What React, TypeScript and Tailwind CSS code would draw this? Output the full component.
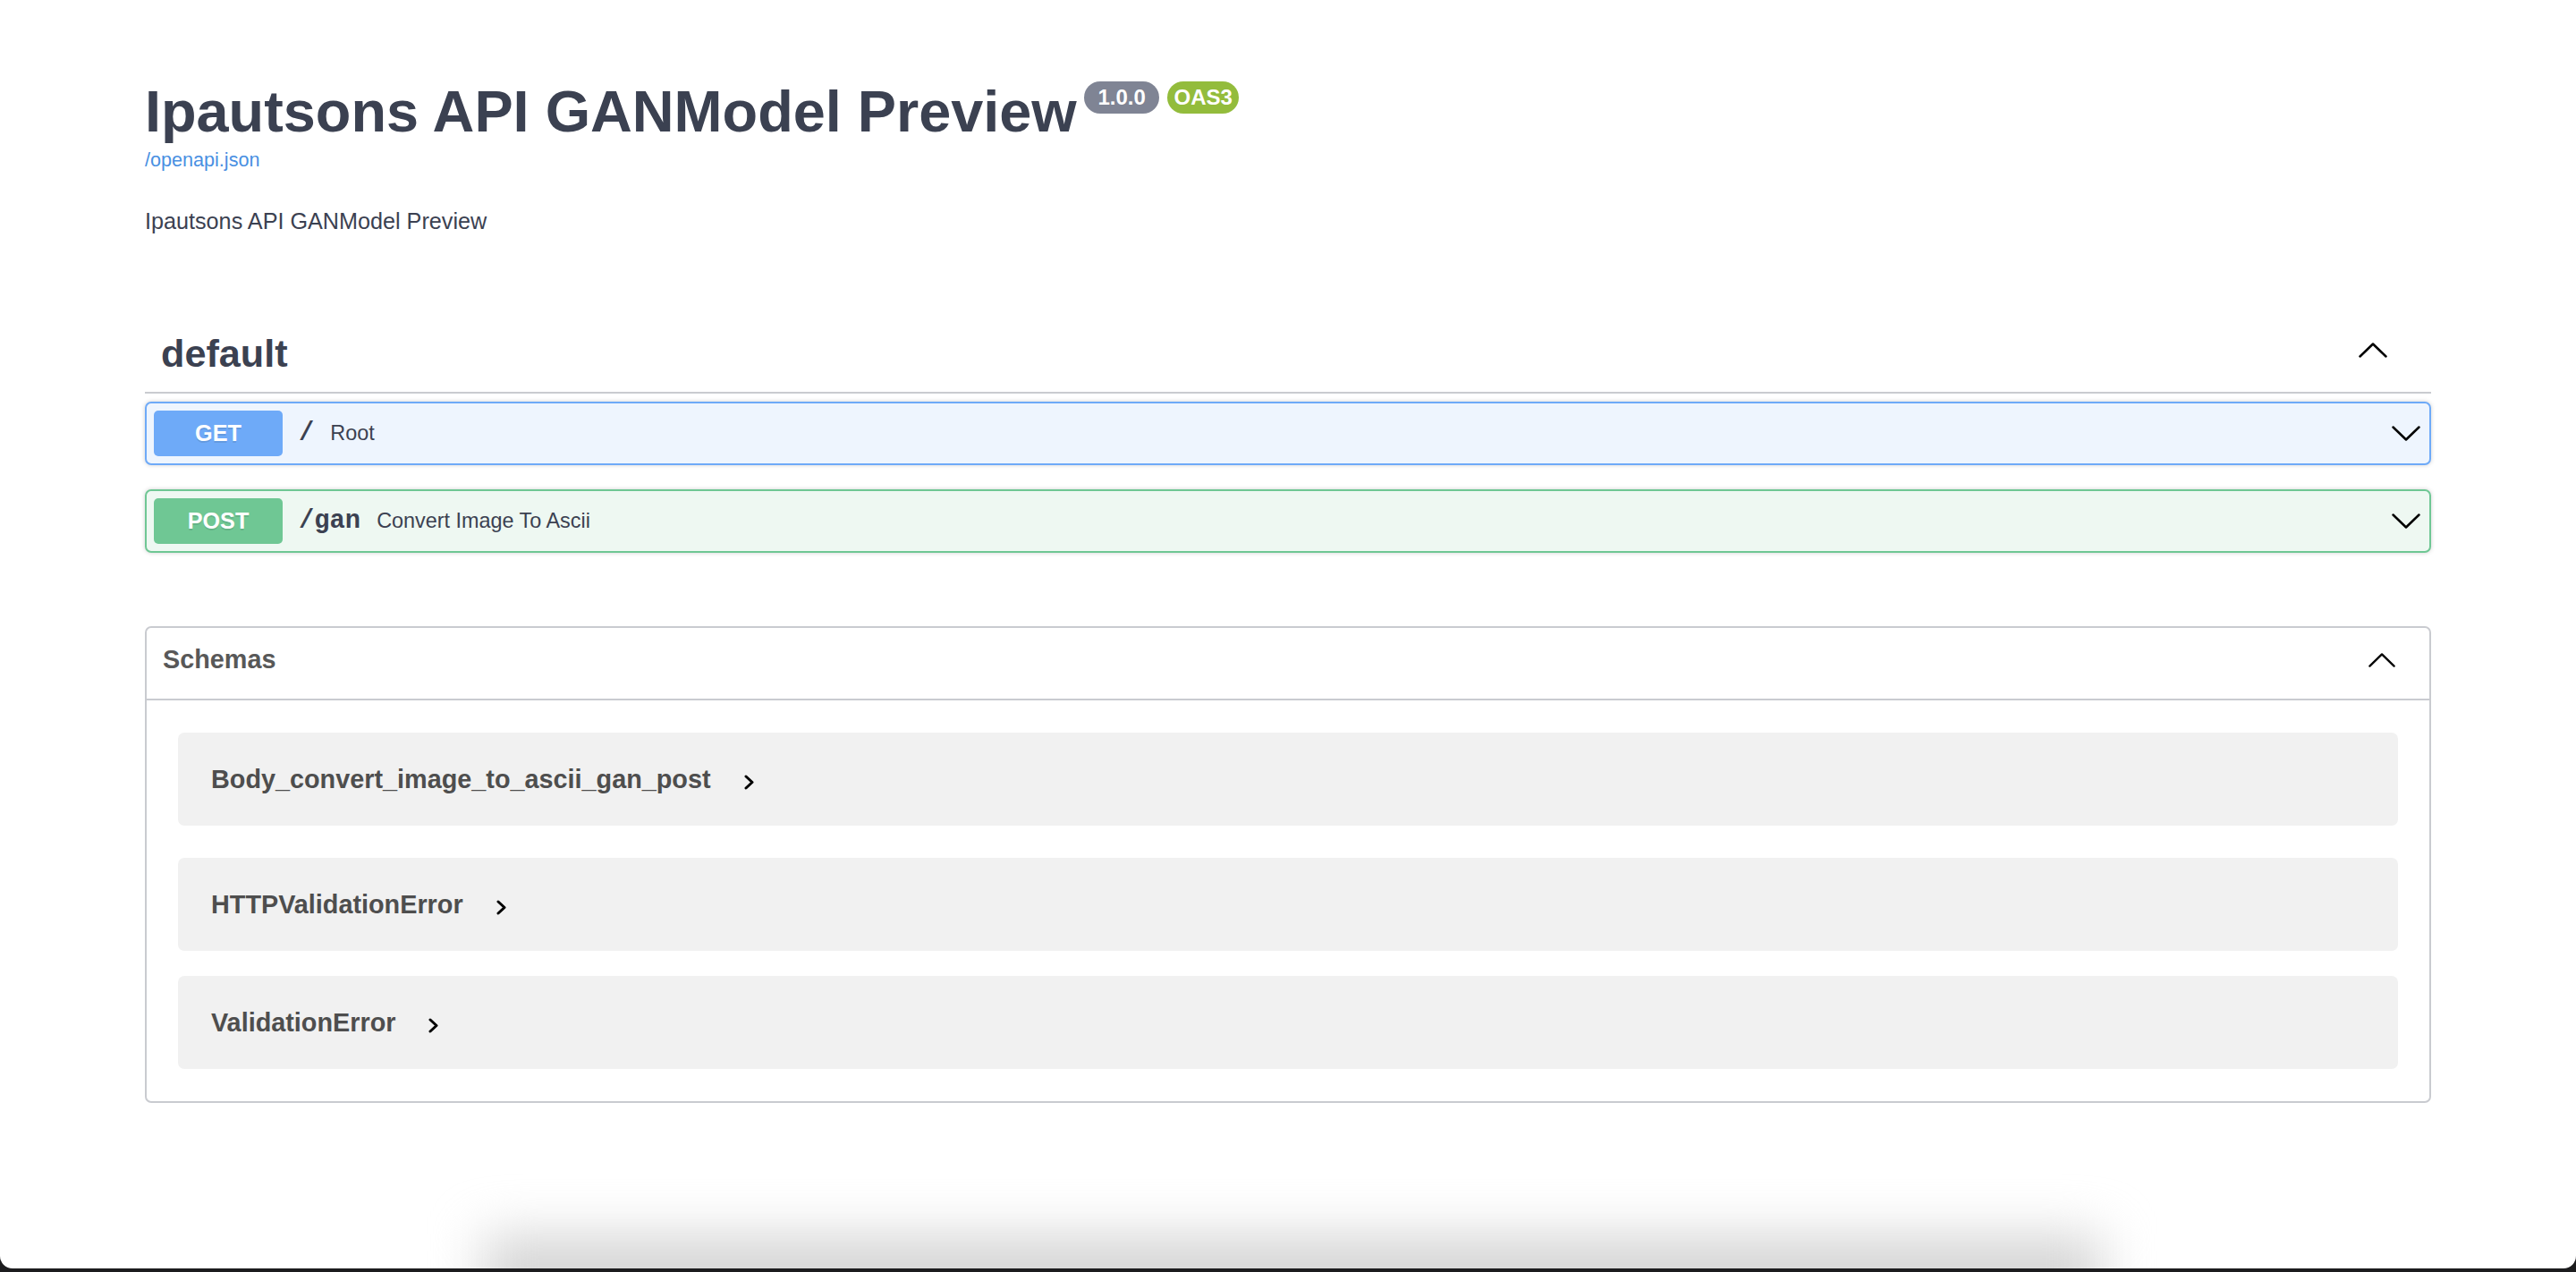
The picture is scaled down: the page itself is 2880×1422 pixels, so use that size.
import React from "react"

type Operation = {
    method: string
    path: string
    summary: string
    blockClass: string
    badgeClass: string
}

const operations: Operation[] = [
    {
        method: "GET",
        path: "/",
        summary: "Root",
        blockClass: "border-[#6eaaf8] bg-[#eef5fe]",
        badgeClass: "bg-[#6eaaf8]",
    },
    {
        method: "POST",
        path: "/gan",
        summary: "Convert Image To Ascii",
        blockClass: "border-[#6fc794] bg-[#eef8f2]",
        badgeClass: "bg-[#6fc794]",
    },
]

const schemas = ["Body_convert_image_to_ascii_gan_post", "HTTPValidationError", "ValidationError"]

function ChevronDown() {
    return (
        <svg width="32" height="17" viewBox="0 0 32 17" className="mr-[2px] shrink-0">
            <polyline points="1.5,1.5 16,15.5 30.5,1.5" fill="none" stroke="#000" strokeWidth="2.5" strokeLinecap="round" strokeLinejoin="round" />
        </svg>
    )
}

function ChevronUp({ w = 32, h = 17 }: { w?: number; h?: number }) {
    return (
        <svg width={w} height={h} viewBox="0 0 32 17" className="shrink-0">
            <polyline points="1.5,15.5 16,1.5 30.5,15.5" fill="none" stroke="#000" strokeWidth="2.5" strokeLinecap="round" strokeLinejoin="round" />
        </svg>
    )
}

function ChevronRight() {
    return (
        <svg width="11" height="17" viewBox="0 0 11 17" className="ml-[37px] mt-[6px] shrink-0">
            <polyline points="2,2 9,8.5 2,15" fill="none" stroke="#000" strokeWidth="3" strokeLinecap="round" strokeLinejoin="round" />
        </svg>
    )
}

function OpBlock({ op }: { op: Operation }) {
    return (
        <div className={`flex h-[71px] items-center rounded-[7px] border-2 px-[8px] shadow-[0_0_5px_rgba(0,0,0,0.19)] ${op.blockClass}`}>
            <span className={`flex h-[51px] w-[144px] shrink-0 items-center justify-center rounded-[5px] text-[25.2px] font-bold text-white [text-shadow:0_2px_0_rgba(0,0,0,0.1)] ${op.badgeClass}`}>
                {op.method}
            </span>
            <span className="px-[18px] font-['Liberation_Mono','Courier_New',monospace] text-[28.8px] font-bold text-[#3b4151]">
                {op.path}
            </span>
            <span className="flex-1 text-[23.4px] text-[#3b4151]">{op.summary}</span>
            <ChevronDown />
        </div>
    )
}

export default function App() {
    return (
        <div className="relative h-[1422px] overflow-hidden bg-[#1c1c1e] font-['Liberation_Sans',Arial,sans-serif]">
            <div className="relative h-[1418px] overflow-hidden rounded-b-[14px] bg-white">
                <div className="mx-auto max-w-[2628px] px-[36px] pt-[92px]">
                    {/* Info */}
                    <div className="flex items-start">
                        <h2 className="text-[64.8px] leading-[65px] font-bold text-[#3b4151]">Ipautsons API GANModel Preview</h2>
                        <div className="-mt-[1px] ml-[8px] flex gap-[9px]">
                            <span className="flex h-[36px] items-center whitespace-pre rounded-full bg-[#7f8494] px-[9px] text-[24px] leading-none font-bold text-white">
                                {" 1.0.0 "}
                            </span>
                            <span className="flex h-[36px] items-center rounded-full bg-[#93bc3c] px-[7px] text-[24px] leading-none font-bold text-white">
                                OAS3
                            </span>
                        </div>
                    </div>
                    <div className="mt-[11px]">
                        <a href="#" className="text-[21.6px] leading-[21.6px] text-[#4990e2]">/openapi.json</a>
                    </div>
                    <p className="mt-[42px] text-[25.2px] leading-[25.2px] text-[#3b4151]">Ipautsons API GANModel Preview</p>

                    {/* default tag */}
                    <div className="mt-[88px]">
                        <div className="flex h-[92px] items-center justify-between border-b-2 border-[#c9cbd0] pl-[18px]">
                            <h3 className="pt-[4px] text-[43.2px] leading-[43.2px] font-bold text-[#3b4151]">default</h3>
                            <div className="mb-[4px] mr-[49px]">
                                <ChevronUp />
                            </div>
                        </div>
                        <div className="mt-[9px] flex flex-col gap-[27px]">
                            {operations.map((op) => (
                                <OpBlock key={op.method} op={op} />
                            ))}
                        </div>
                    </div>

                    {/* Schemas */}
                    <section className="mt-[82px] rounded-[7px] border-2 border-[#c9cbd0] pb-[36px]">
                        <div className="flex h-[81px] items-center justify-between border-b-2 border-[#c9cbd0] pb-[8px] pl-[18px]">
                            <h4 className="text-[28.8px] leading-[28.8px] font-bold text-[#585858]">Schemas</h4>
                            <div className="mr-[38px]">
                                <ChevronUp w={30} h={16} />
                            </div>
                        </div>
                        <div className="flex flex-col">
                            {schemas.map((name, i) => (
                                <div
                                    key={name}
                                    className={`mx-[35px] flex h-[104px] items-center rounded-[7px] bg-[#f1f1f1] pl-[37px] ${i === 2 ? "mt-[28px]" : "mt-[36px]"}`}
                                >
                                    <span className="text-[28.8px] leading-[28.8px] font-bold text-[#4e4e4e]">{name}</span>
                                    <ChevronRight />
                                </div>
                            ))}
                        </div>
                    </section>
                </div>
                <div className="pointer-events-none absolute left-[540px] right-[530px] top-[1380px] h-[100px] bg-[#d6d6d6] blur-[28px]" />
            </div>
        </div>
    )
}
